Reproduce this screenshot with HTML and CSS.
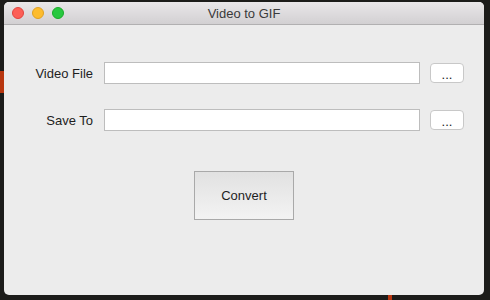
FILE: index.html
```html
<!DOCTYPE html>
<html>
<head>
<meta charset="utf-8">
<link rel="stylesheet" href="styles.css">
</head>
<body>
<div class="accent accent-left"></div>
<div class="accent accent-bottom"></div>
<div class="window">
  <div class="titlebar">
    <div class="lights">
      <span class="light red"></span>
      <span class="light yellow"></span>
      <span class="light green"></span>
    </div>
    <div class="title">Video to GIF</div>
  </div>
  <div class="content">
    <div class="form">
      <label class="label">Video File</label>
      <div class="field"></div>
      <button class="browse">...</button>
      <label class="label">Save To</label>
      <div class="field"></div>
      <button class="browse">...</button>
    </div>
    <div class="actions">
      <button class="convert">Convert</button>
    </div>
  </div>
</div>
</body>
</html>
```
FILE: styles.css
```css
* { box-sizing: border-box; }
html, body {
  margin: 0;
  padding: 0;
  width: 490px;
  height: 300px;
  overflow: hidden;
  background: #1c1c1a;
  font-family: "Liberation Sans", Arial, sans-serif;
  font-size: 13px;
  color: #222;
}
body { padding: 2px 0 0 4px; }
.accent {
  position: absolute;
  background: #b8360f;
}
.accent-left { left: 0; top: 71px; width: 4px; height: 22px; }
.accent-bottom { left: 388px; top: 295px; width: 4px; height: 5px; }
.window {
  position: relative;
  width: 480px;
  height: 293px;
  background: #ececec;
  border-radius: 5px;
  overflow: hidden;
}
.titlebar {
  height: 23px;
  background: linear-gradient(#e9e7e9, #d2d0d2);
  border-bottom: 1px solid #b1b0b1;
  display: flex;
  align-items: center;
  position: relative;
}
.lights {
  display: flex;
  gap: 8px;
  padding-left: 8px;
  position: relative;
  z-index: 1;
}
.light {
  width: 12px;
  height: 12px;
  border-radius: 50%;
  display: block;
}
.red { background: #fc5f57; border: 0.5px solid #e0443e; }
.yellow { background: #fdbc2e; border: 0.5px solid #dea123; }
.green { background: #28c840; border: 0.5px solid #1aab29; }
.title {
  flex: 1;
  text-align: center;
  margin-left: -60px;
  color: #3a3a3a;
  font-size: 13px;
}
.content {
  padding-top: 37px;
}
.form {
  display: grid;
  grid-template-columns: 90px 316px 34px;
  grid-auto-rows: 22px;
  column-gap: 10px;
  row-gap: 25px;
  align-items: center;
}
.label {
  text-align: right;
  color: #1e1e1e;
  padding-right: 1px;
}
.field {
  height: 22px;
  background: #fff;
  border: 1px solid #bdbdbd;
}
.browse {
  height: 20px;
  padding: 0;
  background: #fff;
  border: 1px solid #c8c8c8;
  border-radius: 4px;
  font-family: inherit;
  font-size: 13px;
  color: #222;
  line-height: 14px;
  padding-top: 3px;
}
.actions {
  display: flex;
  justify-content: center;
  padding-top: 40px;
}
.convert {
  width: 100px;
  height: 49px;
  border: 1px solid #a9a9a9;
  background: linear-gradient(#e1e1e1, #f3f3f3);
  font-family: inherit;
  font-size: 13px;
  color: #1e1e1e;
  padding: 0;
}
```
